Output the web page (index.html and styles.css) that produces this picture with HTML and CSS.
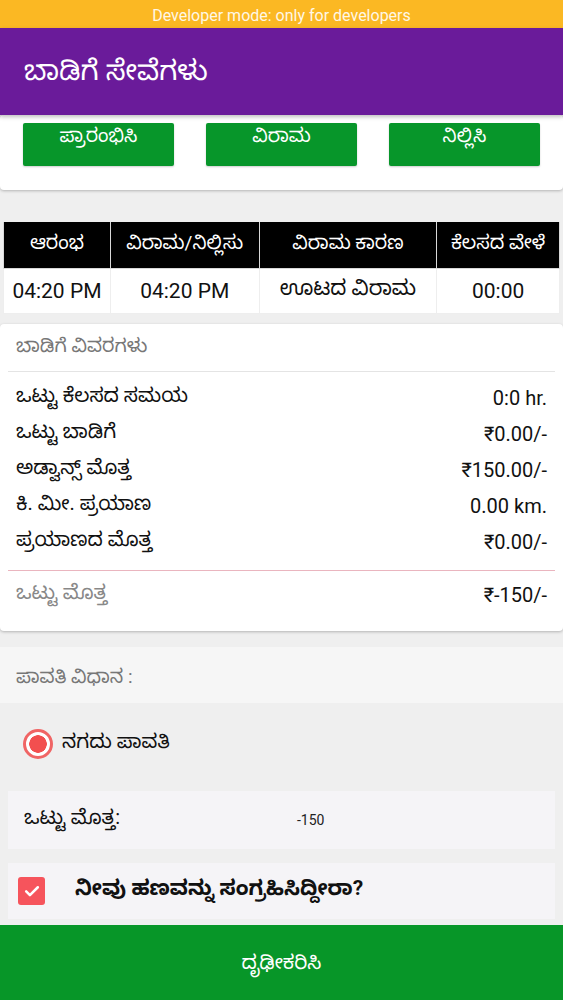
FILE: index.html
```html
<!DOCTYPE html>
<html lang="kn">
<head>
<meta charset="utf-8">
<link rel="stylesheet" href="styles.css">
</head>
<body>
<div class="dev">Developer mode: only for developers</div>
<header class="appbar">ಬಾಡಿಗೆ ಸೇವೆಗಳು</header>
<main class="content">
  <section class="card actions">
    <button class="btn">ಪ್ರಾರಂಭಿಸಿ</button>
    <button class="btn">ವಿರಾಮ</button>
    <button class="btn">ನಿಲ್ಲಿಸಿ</button>
  </section>

  <table class="log">
    <thead>
      <tr><th class="c1">ಆರಂಭ</th><th class="c2">ವಿರಾಮ/ನಿಲ್ಲಿಸು</th><th class="c3">ವಿರಾಮ ಕಾರಣ</th><th class="c4">ಕೆಲಸದ ವೇಳೆ</th></tr>
    </thead>
    <tbody>
      <tr><td>04:20 PM</td><td>04:20 PM</td><td>ಊಟದ ವಿರಾಮ</td><td>00:00</td></tr>
    </tbody>
  </table>

  <section class="card details">
    <div class="details-title">ಬಾಡಿಗೆ ವಿವರಗಳು</div>
    <div class="rows">
      <div class="row"><span>ಒಟ್ಟು ಕೆಲಸದ ಸಮಯ</span><span>0:0 hr.</span></div>
      <div class="row"><span>ಒಟ್ಟು ಬಾಡಿಗೆ</span><span>₹0.00/-</span></div>
      <div class="row"><span>ಅಡ್ವಾನ್ಸ್ ಮೊತ್ತ</span><span>₹150.00/-</span></div>
      <div class="row"><span>ಕಿ. ಮೀ. ಪ್ರಯಾಣ</span><span>0.00 km.</span></div>
      <div class="row"><span>ಪ್ರಯಾಣದ ಮೊತ್ತ</span><span>₹0.00/-</span></div>
    </div>
    <div class="row total"><span class="muted">ಒಟ್ಟು ಮೊತ್ತ</span><span>₹-150/-</span></div>
  </section>

  <div class="pay-title">ಪಾವತಿ ವಿಧಾನ :</div>
  <div class="pay">
    <label class="radio"><span class="radio-dot"></span><span>ನಗದು ಪಾವತಿ</span></label>
    <div class="box sum"><span class="sum-label">ಒಟ್ಟು ಮೊತ್ತ:</span><span class="sum-val">-150</span></div>
    <div class="box check">
      <span class="checkbox"><svg viewBox="0 0 24 24" width="20" height="20"><path d="M5 12.5l4.5 4.5L19 7.5" fill="none" stroke="#fff" stroke-width="3" stroke-linecap="round" stroke-linejoin="round"/></svg></span>
      <span class="check-text">ನೀವು ಹಣವನ್ನು ಸಂಗ್ರಹಿಸಿದ್ದೀರಾ?</span>
    </div>
  </div>
</main>
<footer class="confirm">ದೃಢೀಕರಿಸಿ</footer>
</body>
</html>
```
FILE: styles.css
```css
* { box-sizing: border-box; }
html, body { margin: 0; padding: 0; }
body {
  width: 563px;
  height: 1000px;
  overflow: hidden;
  background: #efefef;
  font-family: Roboto, "Noto Sans", "Noto Sans Kannada", sans-serif;
  color: #111;
  display: flex;
  flex-direction: column;
}
.dev {
  height: 28px;
  background: #fbb823;
  color: #fff7e6;
  font-size: 16px;
  text-align: center;
  line-height: 31px;
}
.appbar {
  height: 87px;
  background: #6a1b9a;
  color: #fff;
  font-size: 28px;
  padding: 5px 0 0 24px;
  display: flex;
  align-items: center;
  box-shadow: 0 2px 4px rgba(0,0,0,0.25);
  position: relative;
  z-index: 2;
}
.content { flex: 1; display: flex; flex-direction: column; }
.card {
  background: #fff;
  border-radius: 4px;
  box-shadow: 0 1px 3px rgba(0,0,0,0.25);
}
.actions {
  height: 75px;
  margin: 0 0 32px;
  display: flex;
  justify-content: space-between;
  padding: 8px 23px 0;
  align-items: flex-start;
}
.btn {
  width: 151px;
  height: 43px;
  background: #07962a;
  color: #fff;
  border: 0;
  border-radius: 2px;
  font: inherit;
  font-size: 19px;
  display: flex;
  justify-content: center;
  align-items: flex-start;
  padding-top: 0;
  line-height: 26px;
  box-shadow: 0 1px 2px rgba(0,0,0,0.2);
}
.log {
  margin: 0 3px;
  width: 557px;
  border-collapse: collapse;
  background: #fff;
}
.log th, .log td {
  border: 1.5px solid #e6e6e6;
  text-align: center;
  padding: 0;
  white-space: nowrap;
}
.log th {
  background: #000;
  color: #fff;
  font-weight: normal;
  font-size: 19px;
  height: 46px;
  border-top: none;
  border-color: #d8d8d8;
}
.log td {
  font-size: 21px;
  height: 45px;
  border-color: #eee;
}
.c1 { width: 107px; }
.c2 { width: 149px; }
.c3 { width: 178px; }
.c4 { width: 123px; }
.details {
  margin-top: 10px;
  padding: 0 8px;
  height: 307px;
  display: flex;
  flex-direction: column;
}
.details-title {
  color: #777;
  font-size: 19px;
  height: 48px;
  padding: 10px 0 0 8px;
  border-bottom: 1.5px solid #e4e4e4;
}
.rows { padding: 8px 0 10px; border-bottom: 1px solid #eab5bf; }
.row {
  display: flex;
  justify-content: space-between;
  font-size: 20px;
  height: 36px;
  align-items: center;
  padding: 0 8px;
}
.row.total { height: 48px; }
.muted { color: #888; }
.pay-title {
  margin-top: 16px;
  height: 56px;
  background: #f6f6f6;
  color: #777;
  font-size: 19px;
  padding: 18px 0 0 16px;
}
.pay {
  flex: 1;
  padding: 0 8px;
  display: flex;
  flex-direction: column;
}
.radio {
  display: flex;
  align-items: center;
  gap: 9px;
  height: 88px;
  padding: 0 0 6px 15px;
  font-size: 20px;
}
.radio-dot {
  width: 30px;
  height: 30px;
  border-radius: 50%;
  border: 3px solid #f06565;
  background: radial-gradient(circle, #f24f4f 0 8.5px, #fff 9px);
}
.box {
  background: #f5f4f7;
  display: flex;
  align-items: center;
}
.sum {
  height: 58px;
  padding-left: 16px;
  margin-bottom: 14px;
}
.sum-label { font-size: 20px; width: 273px; }
.sum-val { font-size: 14px; color: #222; }
.check {
  height: 56px;
  padding-left: 10px;
}
.checkbox {
  width: 27px;
  height: 28px;
  border-radius: 3px;
  background: #f6545c;
  display: flex;
  align-items: center;
  justify-content: center;
  margin-right: 30px;
}
.check-text { font-size: 21px; font-weight: bold; }
.confirm {
  height: 75px;
  background: #079628;
  color: #fff;
  font-size: 20px;
  display: flex;
  align-items: center;
  justify-content: center;
  flex-shrink: 0;
  padding-top: 4px;
}
```
